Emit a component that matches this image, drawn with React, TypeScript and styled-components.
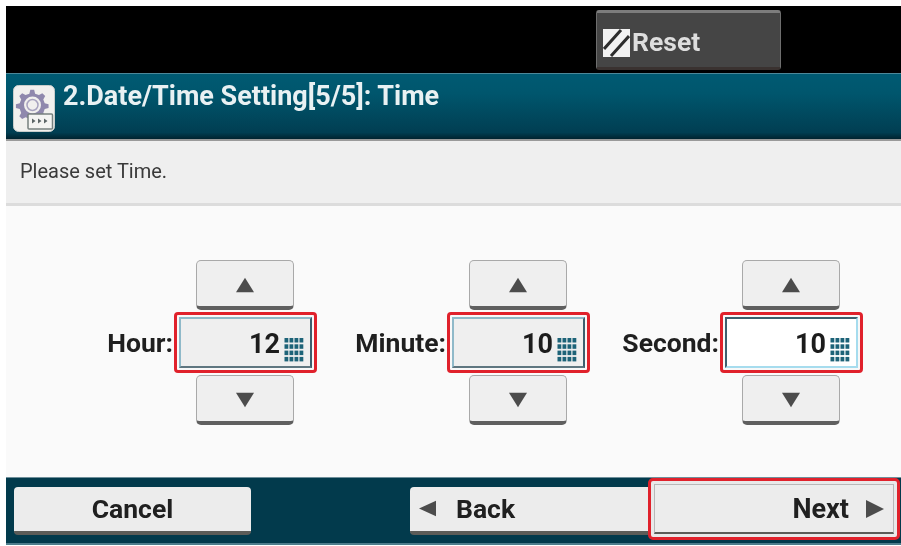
import React from "react";
import styled, { createGlobalStyle } from "styled-components";

const GlobalStyle = createGlobalStyle`
  html, body {
    margin: 0;
    padding: 0;
    background: #fff;
    font-family: Roboto, "Liberation Sans", sans-serif;
  }
`;

const GearIcon: React.FC = () => (
  <svg width="42" height="47" viewBox="0 0 42 47">
    <rect x="0.5" y="0.5" width="41" height="46" rx="5" fill="#f1f0ee" stroke="#c9cdcb" />
    <path
      d="M17 4l4 0 1 4 4 1.5 3.5-2 3 3-2 3.500 1.500 4 4 1 0 4-4 1-1.500 4 2 3.500-3 3-3.500-2-4 1.500-1 4-4 0-1-4-4-1.500-3.500 2-3-3 2-3.500-1.500-4-4-1 0-4 4-1 1.500-4-2-3.500 3-3 3.500 2 4-1.500z"
      fill="#8f88ad"
      transform="translate(1 1) scale(0.96)"
    />
    <circle cx="19.500" cy="20" r="8.500" fill="#f1f0ee" />
    <circle cx="19.500" cy="20" r="5.500" fill="none" stroke="#a8a3bf" strokeWidth="1.500" />
    <rect x="15" y="29" width="24.500" height="15" rx="1" fill="#f4f4f2" stroke="#77807f" strokeWidth="1.500" />
    <path d="M19 33.500l3.500 2.500-3.500 2.500zM25 33.500l3.500 2.500-3.500 2.500zM31 33.500l3.500 2.500-3.500 2.500z" fill="#5d6667" />
  </svg>
);

const ResetIcon: React.FC = () => (
  <svg width="27" height="28" viewBox="0 0 27 28">
    <rect width="27" height="28" fill="#f2f2f2" />
    <path d="M1 20L18 1M8 27L26 7" stroke="#2d2d2d" strokeWidth="3" fill="none" />
  </svg>
);

const KeypadIcon: React.FC = () => (
  <KeypadSvg width="20" height="26" viewBox="0 0 20 26">
    {[0, 1, 2, 3].map((row) =>
      [0, 1, 2, 3].map((col) => (
        <rect key={`${row}-${col}`} x={col * 5 + 0.5} y={row * 6.300 + 1} width="3.800" height="4.500" fill="#1d6378" />
      ))
    )}
  </KeypadSvg>
);

const Arrow: React.FC<{ dir: "up" | "down" | "left" | "right"; size: number }> = ({ dir, size }) => {
  const points = {
    up: "50,10 100,90 0,90",
    down: "0,10 100,10 50,90",
    left: "0,50 100,5 100,95",
    right: "0,0 100,50 0,100",
  }[dir];
  return (
    <svg width={size} height={size} viewBox="0 0 100 100">
      <polygon points={points} fill="#4c4c4c" />
    </svg>
  );
};

const Spinner: React.FC<{ label: string; value: string; focused?: boolean }> = ({ label, value, focused }) => (
  <SpinnerGroup>
    <FieldLabel>{label}</FieldLabel>
    <SpinnerColumn>
      <StepButton>
        <Arrow dir="up" size={18} />
      </StepButton>
      <RedFrame>
        <ValueBox $focused={focused}>
          <ValueText>{value}</ValueText>
          <KeypadIcon />
        </ValueBox>
      </RedFrame>
      <StepButton>
        <Arrow dir="down" size={18} />
      </StepButton>
    </SpinnerColumn>
  </SpinnerGroup>
);

const App: React.FC = () => {
  return (
    <>
      <GlobalStyle />
      <Screen>
        <TopBar>
          <ResetButton>
            <ResetIcon />
            <ResetLabel>Reset</ResetLabel>
          </ResetButton>
        </TopBar>
        <TitleBar>
          <GearIcon />
          <Title>2.Date/Time Setting[5/5]: Time</Title>
        </TitleBar>
        <Prompt>Please set Time.</Prompt>
        <Content>
          <Spinner label="Hour:" value="12" />
          <Spinner label="Minute:" value="10" />
          <Spinner label="Second:" value="10" focused />
        </Content>
        <Footer>
          <CancelButton>Cancel</CancelButton>
          <BackButton>
            <Arrow dir="left" size={17} />
            <span>Back</span>
          </BackButton>
          <NextFrame>
            <NextButton>
              <span>Next</span>
              <Arrow dir="right" size={18} />
            </NextButton>
          </NextFrame>
        </Footer>
      </Screen>
    </>
  );
};

const Screen = styled.div`
  width: 895px;
  height: 540px;
  margin: 6px 0 0 6px;
  display: flex;
  flex-direction: column;
  overflow: hidden;
  filter: blur(0.7px);
`;

const TopBar = styled.div`
  height: 67px;
  flex: none;
  background: #000;
  padding: 4px 0 0 590px;
  box-sizing: border-box;
`;

const ResetButton = styled.div`
  width: 185px;
  height: 60px;
  box-sizing: border-box;
  display: flex;
  align-items: center;
  gap: 2px;
  padding: 6px 0 0 6px;
  background: #454545;
  border: 1px solid #6e6e6e;
  border-top: 3px solid #7c7c7c;
  border-bottom: 3px solid #3a3230;
  border-radius: 3px;
`;

const ResetLabel = styled.span`
  font-size: 26.5px;
  font-weight: 700;
  color: #dedede;
  margin-top: -3px;
`;

const TitleBar = styled.div`
  height: 68px;
  flex: none;
  box-sizing: border-box;
  display: flex;
  align-items: flex-start;
  gap: 8px;
  padding: 11px 0 0 7px;
  background: linear-gradient(#005a72 0%, #00566d 30%, #013e52 90%, #01232f 100%);
  border-top: 1px solid #4d8899;
  border-bottom: 2px solid #9a9a9a;
`;

const Title = styled.h1`
  margin: -5px 0 0;
  font-size: 27px;
  line-height: 32px;
  font-weight: 700;
  color: #e9f1f3;
`;

const Prompt = styled.div`
  height: 65px;
  flex: none;
  box-sizing: border-box;
  display: flex;
  align-items: center;
  padding: 0 0 2px 14px;
  background: #efefef;
  border-bottom: 3px solid #dcdcdc;
  font-size: 20px;
  color: #3a3a3a;
`;

const Content = styled.div`
  height: 271px;
  flex: none;
  box-sizing: border-box;
  display: grid;
  grid-template-columns: repeat(3, 273px);
  padding: 54px 0 0 38px;
  background: #fafafa;
`;

const SpinnerGroup = styled.div`
  display: flex;
  justify-content: flex-end;
  align-items: center;
  align-self: start;
`;

const FieldLabel = styled.span`
  font-size: 26.5px;
  font-weight: 700;
  color: #1f1f1f;
  margin-right: 1px;
`;

const SpinnerColumn = styled.div`
  width: 143px;
  display: flex;
  flex-direction: column;
  align-items: flex-start;
  gap: 2px;
`;

const StepButton = styled.div`
  width: 98px;
  height: 50px;
  margin-left: 22px;
  box-sizing: border-box;
  display: flex;
  align-items: center;
  justify-content: center;
  padding-top: 2px;
  background: #efefef;
  border: 1px solid #a9a9a9;
  border-bottom: 4px solid #5f5f5f;
  border-radius: 5px;
`;

const RedFrame = styled.div`
  width: 143px;
  height: 61px;
  box-sizing: border-box;
  padding: 2px;
  border: 3px solid #e0212b;
  border-radius: 4px;
  background: #f8f8f8;
`;

const ValueBox = styled.div<{ $focused?: boolean }>`
  height: 100%;
  box-sizing: border-box;
  display: flex;
  align-items: center;
  justify-content: flex-end;
  gap: 4px;
  padding-right: 6px;
  background: ${(p) => (p.$focused ? "#fff" : "#efefef")};
  border-style: solid;
  border-width: 2px;
  border-color: ${(p) =>
    p.$focused ? "#3d5f6e #a6dcee #a6dcee #3d5f6e" : "#8fb9c9 #3d5f6e #5e7680 #8fb9c9"};
`;

const ValueText = styled.span`
  font-size: 27px;
  font-weight: 700;
  color: #1c1c1c;
  margin-top: 3px;
`;

const KeypadSvg = styled.svg`
  margin-top: 14px;
`;

const Footer = styled.div`
  height: 68px;
  flex: none;
  box-sizing: border-box;
  display: flex;
  align-items: center;
  padding-left: 8px;
  background: #023a4c;
  border-top: 1px solid #6f8f9a;
  border-bottom: 2px solid #4e7d8c;
`;

const FooterButton = styled.div`
  height: 48px;
  box-sizing: border-box;
  display: flex;
  align-items: center;
  background: #ececec;
  border-bottom: 4px solid #5c5c58;
  border-radius: 4px;
  font-size: 26.5px;
  font-weight: 700;
  color: #202020;
`;

const CancelButton = styled(FooterButton)`
  width: 237px;
  justify-content: center;
  margin-right: 159px;
`;

const BackButton = styled(FooterButton)`
  width: 238px;
  gap: 20px;
  padding-left: 9px;
  border-radius: 4px 0 0 4px;
`;

const NextFrame = styled.div`
  width: 252px;
  height: 62px;
  box-sizing: border-box;
  flex: none;
  padding: 3px;
  margin-top: -3px;
  border: 3px solid #e0212b;
  border-radius: 5px;
  background: #e9e9e9;
`;

const NextButton = styled.div`
  height: 100%;
  box-sizing: border-box;
  display: flex;
  align-items: center;
  justify-content: flex-end;
  gap: 17px;
  padding-right: 9px;
  background: #ececec;
  border: 1px solid #b8b8b8;
  border-bottom: 2px solid #5c5c58;
  font-size: 27px;
  font-weight: 700;
  color: #202020;
`;

export default App;
